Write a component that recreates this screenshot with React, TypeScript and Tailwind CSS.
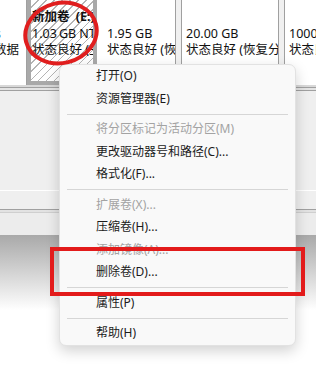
const font = "font-['Noto_Sans','Noto_Sans_CJK_SC',sans-serif]";

interface MenuItem {
  label: string;
  disabled?: boolean;
  sep?: boolean;
}

const menu: MenuItem[] = [
  { label: "打开(O)" },
  { label: "资源管理器(E)" },
  { label: "", sep: true },
  { label: "将分区标记为活动分区(M)", disabled: true },
  { label: "更改驱动器号和路径(C)..." },
  { label: "格式化(F)..." },
  { label: "", sep: true },
  { label: "扩展卷(X)...", disabled: true },
  { label: "压缩卷(H)..." },
  { label: "添加镜像(A)...", disabled: true },
  { label: "删除卷(D)..." },
  { label: "", sep: true },
  { label: "属性(P)" },
  { label: "", sep: true },
  { label: "帮助(H)" },
];

function Lines({ a, b, c, bold }: { a: string; b: string; c: string; bold?: boolean }) {
  return (
    <div className="flex flex-col whitespace-nowrap pt-[9px] text-[12.5px] leading-[16.5px] text-[#111]">
      <span className={bold ? "font-bold" : ""}>{a || "\u00a0"}</span>
      <span>{b}</span>
      <span>{c}</span>
    </div>
  );
}

export default function App() {
  return (
    <div className={`relative h-[385px] w-[316px] overflow-hidden bg-white ${font}`}>
      {/* volume row */}
      <div className="flex h-[85px] bg-[#f0f0f0]">
        <div className="w-[27px] shrink-0 overflow-hidden border-r border-[#a0a0a0] bg-white">
          <div className="-ml-[6px] flex flex-col whitespace-nowrap pt-[9px] text-[12.5px] leading-[16.5px] text-[#111]">
            <span>{"\u00a0"}</span>
            <span className="ml-[1px] text-[#3b6fb0]">s</span>
            <span>数据</span>
          </div>
        </div>
        <div className="w-[70px] shrink-0 overflow-hidden border-x-4 border-b-4 border-[#a9a9a9] bg-[repeating-linear-gradient(135deg,#ffffff_0px,#ffffff_4.6px,#b4b4b4_4.6px,#b4b4b4_5.7px)] pl-[1px]">
          <Lines a={"新加卷\u2002(E:)"} b={"1.03\u2009GB NTFS"} c="状态良好 (主分区)" bold />
        </div>
        <div className="w-[79px] shrink-0 overflow-hidden border-r border-[#a0a0a0] bg-white pl-[10px]">
          <Lines a="" b="1.95 GB" c="状态良好 (恢复分区)" />
        </div>
        <div className="w-[5px] shrink-0" />
        <div className="w-[98px] shrink-0 overflow-hidden border-x border-[#a0a0a0] bg-white pl-[4px]">
          <Lines a="" b="20.00 GB" c="状态良好 (恢复分区)" />
        </div>
        <div className="w-[5px] shrink-0" />
        <div className="flex-1 overflow-hidden border-l border-[#a0a0a0] bg-white pl-[4px]">
          <Lines a="" b="1000.00 GB" c="状态良好 (基本数据分区)" />
        </div>
      </div>
      <div className="h-[2px] bg-[#d8d8d8]" />
      <div className="h-px bg-[#a0a0a0]" />
      <div className="h-[2px] bg-[#e4e4e4]" />
      <div className="h-px bg-[#a0a0a0]" />

      {/* lower panel */}
      <div className="h-[99px] bg-[#efefef]" />
      <div className="h-px bg-white" />
      <div className="h-[18px] bg-[#efefef]" />
      <div className="h-px bg-[#a0a0a0]" />
      <div className="h-[2px] bg-[#e2e2e2]" />
      <div className="h-px bg-[#cfcfcf]" />
      <div className="h-[22px] bg-[#ececec]" />
      <div className="h-[75px] bg-gradient-to-b from-[#a9a9a9] to-white" />

      {/* context menu */}
      <div className="absolute left-[59px] top-[64px] w-[237px] rounded-[7px] border border-[#e2e2e2] bg-[#f9f9f9] shadow-[0_5px_14px_rgba(0,0,0,0.18)]">
        {menu.map((m, i) =>
          m.sep ? (
            <div key={i} className="flex h-[8px] items-center px-[7px]">
              <div className="h-px w-full bg-[#d6d6d6]" />
            </div>
          ) : (
            <div
              key={i}
              className={`flex h-[22.5px] items-center pl-[36px] text-[12px] ${
                m.disabled ? "text-[#a3a3a3]" : "text-[#1b1b1b]"
              }`}
            >
              {m.label}
            </div>
          )
        )}
      </div>

      {/* annotation: red box */}
      <div className="absolute left-[50px] top-[247px] h-[49px] w-[255px] border-4 border-[#e31b1b]" />

      {/* annotation: red ellipse */}
      <svg className="absolute left-0 top-0" width="120" height="80" viewBox="0 0 120 80">
        <ellipse
          cx="61"
          cy="33"
          rx="36"
          ry="30"
          transform="rotate(-14 61 33)"
          fill="none"
          stroke="#e01e1e"
          strokeWidth="4"
        />
      </svg>
    </div>
  );
}
